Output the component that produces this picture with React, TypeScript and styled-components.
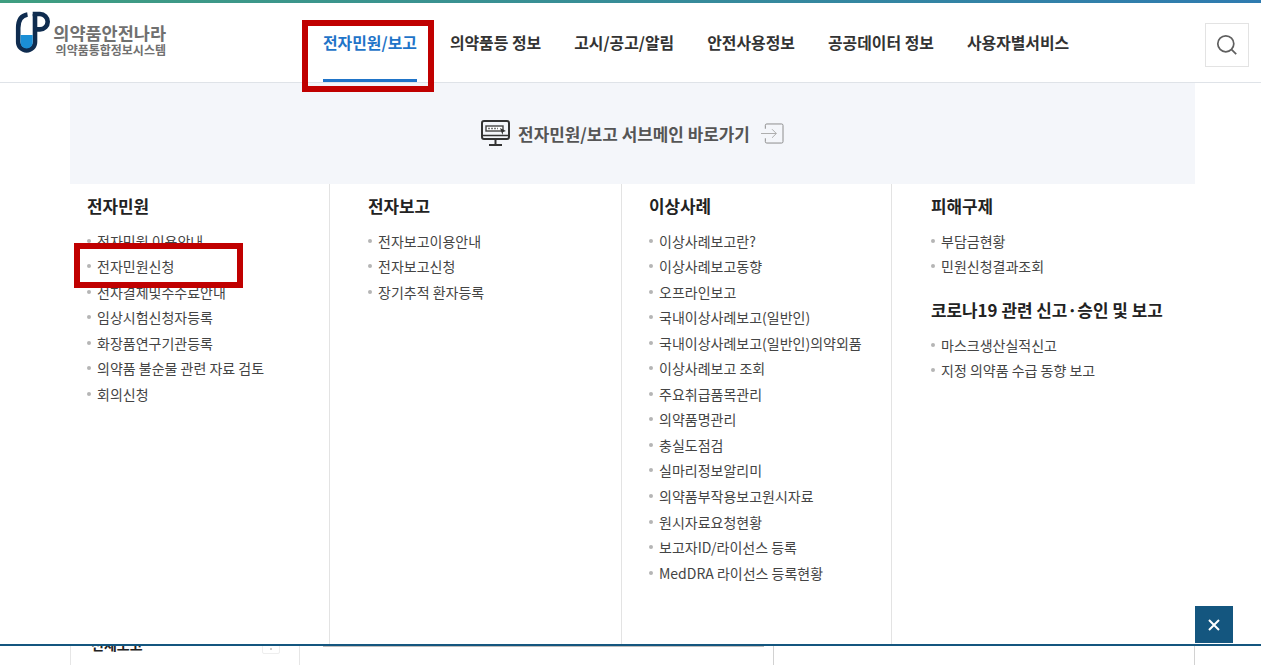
import styled, { createGlobalStyle } from "styled-components";

type Column = {
  width: number;
  pad: number;
  title: string;
  items: string[];
  extraTitle?: string;
  extraItems?: string[];
};

const navItems = ["전자민원/보고", "의약품등 정보", "고시/공고/알림", "안전사용정보", "공공데이터 정보", "사용자별서비스"];

const columns: Column[] = [
  {
    width: 260,
    pad: 17,
    title: "전자민원",
    items: ["전자민원 이용안내", "전자민원신청", "전자결제및수수료안내", "임상시험신청자등록", "화장품연구기관등록", "의약품 불순물 관련 자료 검토", "회의신청"],
  },
  {
    width: 292,
    pad: 38,
    title: "전자보고",
    items: ["전자보고이용안내", "전자보고신청", "장기추적 환자등록"],
  },
  {
    width: 270,
    pad: 27,
    title: "이상사례",
    items: ["이상사례보고란?", "이상사례보고동향", "오프라인보고", "국내이상사례보고(일반인)", "국내이상사례보고(일반인)의약외품", "이상사례보고 조회", "주요취급품목관리", "의약품명관리", "충실도점검", "실마리정보알리미", "의약품부작용보고원시자료", "원시자료요청현황", "보고자ID/라이선스 등록", "MedDRA 라이선스 등록현황"],
  },
  {
    width: 303,
    pad: 39,
    title: "피해구제",
    items: ["부담금현황", "민원신청결과조회"],
    extraTitle: "코로나19 관련 신고·승인 및 보고",
    extraItems: ["마스크생산실적신고", "지정 의약품 수급 동향 보고"],
  },
];

export default function App() {
  return (
    <Page>
      <GlobalStyle />
      <TopBar />
      <Header>
        <Logo>
          <svg width="36" height="44" viewBox="0 0 36 44" fill="none">
            <path d="M12.5 3.5 C6 4.5 3.2 10 3.2 17 V31 A8.4 8.4 0 0 0 20 31 V3" stroke="#0f2c4f" strokeWidth="4.6" />
            <path d="M5.5 24 H17.7 V31.5 A6.1 6.1 0 0 1 5.5 31.5 Z" fill="#1b8fd6" />
            <path d="M17.7 3 H25 A7.7 7.7 0 0 1 25 18.4 H20" stroke="#0f2c4f" strokeWidth="4.6" />
          </svg>
          <LogoText>
            <LogoMain>의약품안전나라</LogoMain>
            <LogoSub>의약품통합정보시스템</LogoSub>
          </LogoText>
        </Logo>
        <Nav>
          {navItems.map((item, i) => (
            <NavItem key={item} $active={i === 0}>
              {item}
            </NavItem>
          ))}
        </Nav>
        <SearchButton>
          <svg width="22" height="22" viewBox="0 0 22 22" fill="none" stroke="#5f5f5f" strokeWidth="1.7">
            <circle cx="9.8" cy="9.8" r="8" />
            <path d="M15.6 15.6 L20.2 20.2" />
          </svg>
        </SearchButton>
      </Header>

      <Panel>
        <SubBanner>
          <svg width="29" height="27" viewBox="0 0 29 27" fill="none">
            <rect x="1" y="1" width="27" height="18" rx="2" stroke="#333" strokeWidth="2" />
            <rect x="5" y="6" width="17" height="5" fill="#fff" stroke="#444" strokeWidth="1.4" />
            <path d="M7 8.5 H17" stroke="#777" strokeWidth="1.4" strokeDasharray="2 1" />
            <path d="M19 8 L25 11 L22 12 L21.5 15 Z" fill="#333" />
            <path d="M2 15.5 H27" stroke="#333" strokeWidth="1.5" />
            <path d="M14.5 19 V24 M8 25 H21" stroke="#333" strokeWidth="2" />
          </svg>
          <SubBannerText>전자민원/보고 서브메인 바로가기</SubBannerText>
          <svg width="23" height="21" viewBox="0 0 24 22" fill="none" stroke="#888" strokeWidth="1">
            <path d="M4.5 6 V2.5 A1.5 1.5 0 0 1 6 1 H21.5 A1.5 1.5 0 0 1 23 2.5 V19.5 A1.5 1.5 0 0 1 21.5 21 H6 A1.5 1.5 0 0 1 4.5 19.5 V16" />
            <path d="M0 11 H16 M11.5 6.5 L16 11 L11.5 15.5" stroke="#aaa" />
          </svg>
        </SubBanner>
        <Columns>
          {columns.map((col) => (
            <MenuColumn key={col.title} $width={col.width} $pad={col.pad}>
              <ColumnTitle>{col.title}</ColumnTitle>
              <MenuList>
                {col.items.map((item) => (
                  <MenuItem key={item}>{item}</MenuItem>
                ))}
              </MenuList>
              {col.extraTitle && <ExtraTitle>{col.extraTitle}</ExtraTitle>}
              {col.extraItems && (
                <MenuList>
                  {col.extraItems.map((item) => (
                    <MenuItem key={item}>{item}</MenuItem>
                  ))}
                </MenuList>
              )}
            </MenuColumn>
          ))}
        </Columns>
      </Panel>

      <BottomRule />
      <Behind>
        <BehindSide>
          <BehindLabel>전체보고</BehindLabel>
          <PlusBox />
        </BehindSide>
        <BehindMain />
        <BehindRest />
      </Behind>

      <CloseButton>
        <svg width="12" height="12" viewBox="0 0 12 12" stroke="#fff" strokeWidth="2">
          <path d="M1 1 L11 11 M11 1 L1 11" />
        </svg>
      </CloseButton>

      <RedFrame $left={302} $top={20} $width={132} $height={72} />
      <RedFrame $left={74} $top={243} $width={169} $height={45} />
    </Page>
  );
}

const GlobalStyle = createGlobalStyle`
  html, body {
    margin: 0;
    padding: 0;
    background: #fff;
    overflow: hidden;
  }
  * {
    box-sizing: border-box;
  }
`;

const Page = styled.div`
  position: relative;
  width: 1261px;
  height: 665px;
  overflow: hidden;
  background: #fff;
  font-family: "Noto Sans CJK KR", "Noto Sans", sans-serif;
  color: #333;
`;

const TopBar = styled.div`
  height: 3px;
  background: linear-gradient(90deg, #3f9e80 0%, #2f7bb0 100%);
`;

const Header = styled.header`
  display: flex;
  height: 80px;
  padding: 0 12px 0 15px;
  border-bottom: 1px solid #dfe3e8;
`;

const Logo = styled.div`
  display: flex;
  align-items: flex-start;
  gap: 1px;
  width: 308px;
  padding-top: 8px;
`;

const LogoText = styled.div`
  display: flex;
  flex-direction: column;
  align-items: flex-end;
  width: 114px;
  padding-top: 11px;
  color: #707070;
  font-weight: 700;
`;

const LogoMain = styled.span`
  font-size: 17.5px;
  line-height: 21px;
  white-space: nowrap;
`;

const LogoSub = styled.span`
  font-size: 12px;
  line-height: 13px;
  white-space: nowrap;
`;

const Nav = styled.nav`
  display: flex;
  gap: 33px;
  height: 79px;
`;

const NavItem = styled.a<{ $active?: boolean }>`
  display: block;
  height: 79px;
  padding-top: 28px;
  font-size: 15.9px;
  line-height: 24px;
  font-weight: 700;
  white-space: nowrap;
  color: ${(p) => (p.$active ? "#1f74c8" : "#333")};
  border-bottom: 3px solid ${(p) => (p.$active ? "#1f74c8" : "transparent")};
`;

const SearchButton = styled.button`
  display: flex;
  align-items: center;
  justify-content: center;
  width: 44px;
  height: 44px;
  margin: 20px 0 0 auto;
  padding: 0;
  background: #fff;
  border: 1px solid #e3e3e3;
`;

const Panel = styled.div`
  width: 1125px;
  height: 561px;
  margin-left: 70px;
  display: flex;
  flex-direction: column;
`;

const SubBanner = styled.div`
  display: flex;
  align-items: center;
  justify-content: center;
  gap: 8px;
  height: 101px;
  background: #f4f6fa;
`;

const SubBannerText = styled.span`
  font-size: 16.9px;
  font-weight: 700;
  color: #555;
  margin: 0 3px 0 0;
`;

const Columns = styled.div`
  display: flex;
  flex: 1;
`;

const MenuColumn = styled.div<{ $width: number; $pad: number }>`
  width: ${(p) => p.$width}px;
  padding: 9px 0 0 ${(p) => p.$pad}px;
  border-right: 1px solid #e3e3e3;

  &:last-child {
    border-right: 0;
  }
`;

const ColumnTitle = styled.h3`
  margin: 0 0 9.5px;
  font-size: 16.9px;
  line-height: 26px;
  font-weight: 700;
  color: #222;
`;

const ExtraTitle = styled(ColumnTitle)`
  margin: 17px 0 10px;
`;

const MenuList = styled.ul`
  margin: 0;
  padding: 0;
  list-style: none;
`;

const MenuItem = styled.li`
  position: relative;
  height: 25.55px;
  padding-left: 10px;
  font-size: 14px;
  line-height: 25.55px;
  color: #444;
  white-space: nowrap;

  &::before {
    content: "";
    position: absolute;
    left: 0;
    top: 10px;
    width: 4px;
    height: 4px;
    background: #b5b5b5;
    border-radius: 50%;
  }
`;

const BottomRule = styled.div`
  height: 2px;
  background: #14567f;
`;

const Behind = styled.div`
  display: flex;
  height: 19px;
  margin-left: 70px;
  width: 1125px;
  overflow: hidden;
`;

const BehindSide = styled.div`
  position: relative;
  width: 230px;
  height: 100%;
  border-left: 1px solid #e6e6e6;
  border-right: 1px solid #e6e6e6;
`;

const BehindLabel = styled.span`
  position: absolute;
  left: 20px;
  top: -12px;
  font-size: 14px;
  line-height: 20px;
  font-weight: 700;
  color: #222;
`;

const PlusBox = styled.span`
  position: absolute;
  left: 191px;
  top: -8px;
  width: 18px;
  height: 16px;
  border: 1px solid #eeeeee;
  border-radius: 2px;

  &::after {
    content: "";
    position: absolute;
    left: 7px;
    top: 9px;
    width: 2px;
    height: 2px;
    background: #cccccc;
  }
`;

const BehindMain = styled.div`
  position: relative;
  width: 474px;
  border-right: 1px solid #d2d2d2;

  &::before {
    content: "";
    position: absolute;
    left: 23px;
    top: 0;
    width: 441px;
    height: 1px;
    background: #bdbdbd;
  }
`;

const BehindRest = styled.div`
  flex: 1;
  border-right: 1px solid #d2d2d2;
`;

const CloseButton = styled.button`
  position: absolute;
  left: 1195px;
  top: 606px;
  width: 38px;
  height: 37px;
  display: flex;
  align-items: center;
  justify-content: center;
  padding: 0;
  border: 0;
  background: #14567f;
`;

const RedFrame = styled.div<{ $left: number; $top: number; $width: number; $height: number }>`
  position: absolute;
  left: ${(p) => p.$left}px;
  top: ${(p) => p.$top}px;
  width: ${(p) => p.$width}px;
  height: ${(p) => p.$height}px;
  border: 6px solid #c00000;
`;
